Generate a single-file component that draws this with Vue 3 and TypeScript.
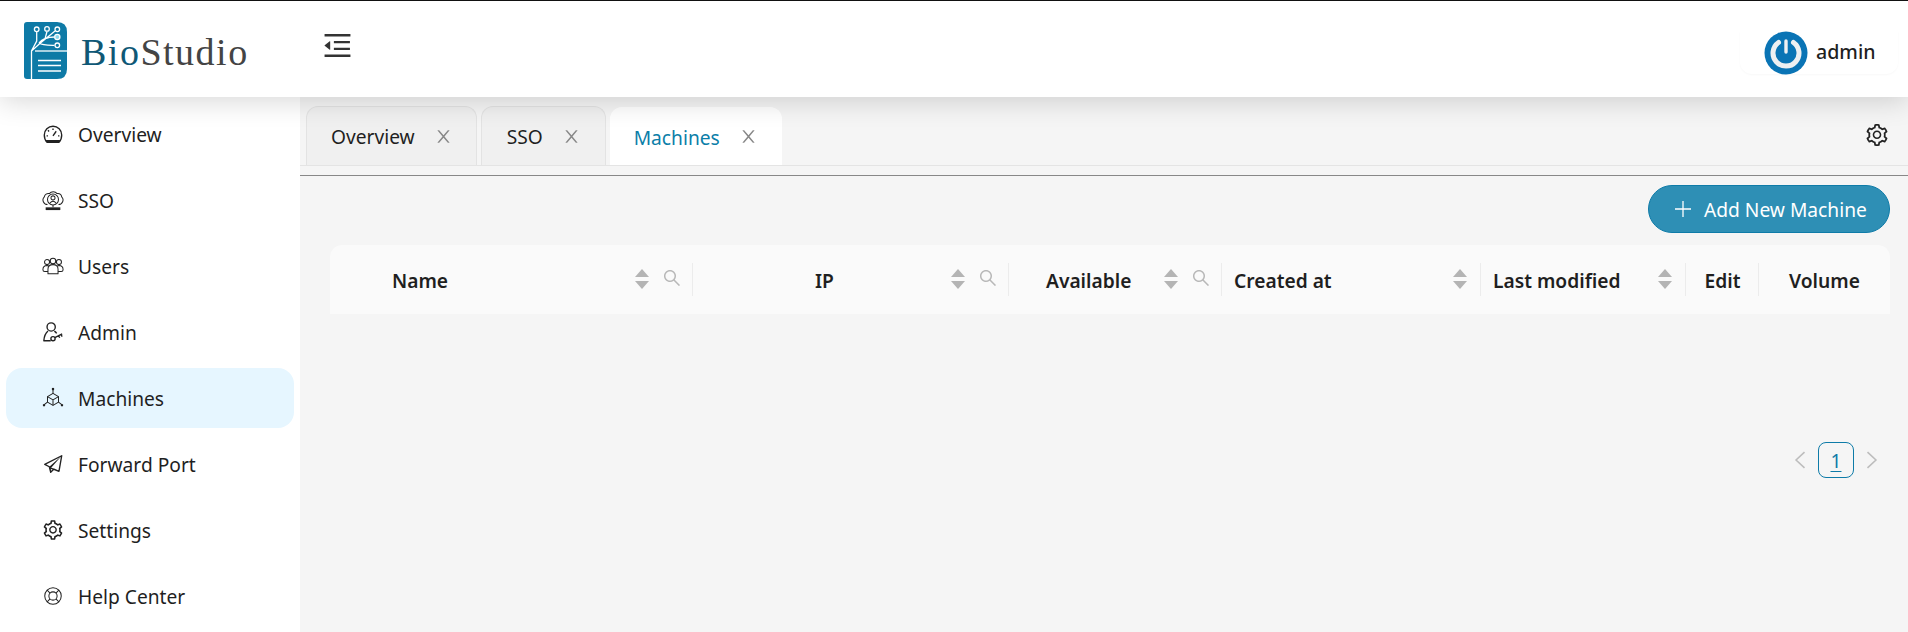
<template>
  <div class="app">
    <header class="topbar">
      <div class="brand">
        <svg class="logo" viewBox="0 0 43 57">
          <path d="M3 0H33Q43 0 43 10V47Q43 57 33 57H3Q0 57 0 54V3Q0 0 3 0Z" fill="#0e7aa6" />
          <g fill="none" stroke="#fff" stroke-width="1.3">
            <path d="M7.5 57V29L12.7 19V10M7.5 29L21 17L23 9.500M14 23L31 9M15 21Q20 15 30.500 15M15 21Q18 23.500 30.500 23.300" />
            <path d="M11 29H43" />
            <path d="M14 38.500H37M14 43.500H37M14 49H37" />
            <circle cx="12.700" cy="7.300" r="2.300" />
            <circle cx="23" cy="6.900" r="2.300" />
            <circle cx="33.300" cy="7.300" r="2.300" />
            <circle cx="33.300" cy="15" r="2.600" fill="#8fd8ee" />
            <circle cx="33.300" cy="23.300" r="2.300" />
          </g>
        </svg>
        <span class="brand-name"><span class="bio">Bio</span>Studio</span>
      </div>
      <svg class="fold" viewBox="64 64 896 896">
        <path :d="foldPath" fill="currentColor" />
      </svg>
      <div class="user">
        <svg class="avatar" viewBox="0 0 44 44">
          <circle cx="22" cy="22" r="21.500" fill="#0a74b5" />
          <path d="M14.500 11.500A13 13 0 1 0 29.500 11.500" fill="none" stroke="#eef0f2" stroke-width="5" stroke-linecap="round" />
          <path d="M22 10V21" stroke="#eef0f2" stroke-width="3.400" stroke-linecap="round" />
        </svg>
        <span class="user-name">admin</span>
      </div>
    </header>

    <div class="body">
      <aside class="sidebar">
        <a
          v-for="item in navItems"
          :key="item.label"
          class="nav-item"
          :class="{ active: item.label === 'Machines' }"
        >
          <svg class="nav-icon" :class="item.kind" :viewBox="item.box || '0 0 24 24'">
            <path v-for="d in item.paths" :key="d" :d="d" />
            <path v-for="d in item.dark" :key="d" class="dark" :d="d" />
          </svg>
          <span>{{ item.label }}</span>
        </a>
      </aside>

      <main class="main">
        <div class="tabs">
          <div
            v-for="tab in tabs"
            :key="tab"
            class="tab"
            :class="{ current: tab === 'Machines' }"
          >
            <span class="tab-label">{{ tab }}</span>
            <svg class="tab-close" viewBox="64 64 896 896">
              <path :d="closePath" fill="currentColor" />
            </svg>
          </div>
          <svg class="tabs-gear" viewBox="64 64 896 896">
            <path :d="gearPath" fill="currentColor" />
          </svg>
        </div>

        <div class="divider"></div>

        <div class="toolbar">
          <button class="add-btn">
            <svg class="plus" viewBox="0 0 16 16">
              <path d="M8 0V16M0 8H16" stroke="currentColor" stroke-width="1.3" />
            </svg>
            <span>Add New Machine</span>
          </button>
        </div>

        <div class="table-head">
          <div
            v-for="col in columns"
            :key="col.title"
            class="th"
            :class="col.cls"
            :style="{ width: col.width + 'px' }"
          >
            <span class="th-title">{{ col.title }}</span>
            <span v-if="col.sort" class="sorter">
              <i class="up"></i>
              <i class="down"></i>
            </span>
            <svg v-if="col.search" class="th-search" viewBox="64 64 896 896">
              <path :d="searchPath" fill="currentColor" />
            </svg>
          </div>
        </div>

        <div class="pager">
          <svg class="arrow" viewBox="0 0 10 16"><path d="M9 1L1.500 8L9 15" /></svg>
          <a class="page-num">1</a>
          <svg class="arrow" viewBox="0 0 10 16"><path d="M1 1L8.500 8L1 15" /></svg>
        </div>
      </main>
    </div>
  </div>
</template>

<script setup lang="ts">
interface NavItem {
  label: string
  paths: string[]
  dark?: string[]
  box?: string
  kind?: 'fill' | 'bold'
}

interface Column {
  title: string
  width: number
  cls: string
  sort?: boolean
  search?: boolean
}

const foldPath =
  'M408 442h480c4.4 0 8-3.6 8-8v-56c0-4.4-3.6-8-8-8H408c-4.4 0-8 3.6-8 8v56c0 4.4 3.6 8 8 8zm-8 204c0 4.4 3.6 8 8 8h480c4.4 0 8-3.6 8-8v-56c0-4.4-3.6-8-8-8H408c-4.4 0-8 3.6-8 8v56zm504-486H120c-4.4 0-8 3.6-8 8v56c0 4.4 3.6 8 8 8h784c4.4 0 8-3.6 8-8v-56c0-4.4-3.6-8-8-8zm0 632H120c-4.4 0-8 3.6-8 8v56c0 4.4 3.6 8 8 8h784c4.4 0 8-3.6 8-8v-56c0-4.4-3.6-8-8-8zM115.4 518.9L271.7 642c5.8 4.6 14.4.5 14.4-6.9V388.9c0-7.4-8.5-11.5-14.4-6.9L115.4 505.1a8.74 8.74 0 000 13.8z'
const closePath =
  'M563.8 512l262.5-312.9c4.4-5.2.7-13.1-6.1-13.1h-79.8c-4.7 0-9.2 2.1-12.3 5.7L511.6 449.8 295.1 191.7c-3-3.6-7.5-5.7-12.3-5.7H203c-6.8 0-10.5 7.9-6.1 13.1L459.4 512 196.9 824.9A7.95 7.95 0 00203 838h79.8c4.7 0 9.2-2.1 12.3-5.7l216.5-258.1 216.5 258.1c3 3.6 7.5 5.7 12.3 5.7h79.8c6.8 0 10.5-7.9 6.1-13.1L563.8 512z'
const searchPath =
  'M909.6 854.5L649.9 594.8C690.2 542.7 712 479 712 412c0-80.2-31.3-155.4-87.9-212.1-56.6-56.7-132-87.9-212.1-87.9s-155.5 31.3-212.1 87.9C143.2 256.5 112 331.8 112 412c0 80.1 31.3 155.5 87.9 212.1C256.5 680.8 331.8 712 412 712c67 0 130.6-21.8 182.7-62l259.7 259.6a8.2 8.2 0 0011.6 0l43.6-43.5a8.2 8.2 0 000-11.6zM570.4 570.4C528 612.7 471.8 636 412 636s-116-23.3-158.4-65.6C211.3 528 188 471.8 188 412s23.3-116.1 65.6-158.4C296 211.3 352.2 188 412 188s116.1 23.2 158.4 65.6S636 352.2 636 412s-23.3 116.1-65.6 158.4z'
const gearPath =
  'M924.8 625.7l-65.5-56c3.1-19 4.7-38.4 4.7-57.8s-1.6-38.8-4.7-57.8l65.5-56a32.03 32.03 0 009.3-35.2l-.9-2.6a443.74 443.74 0 00-79.7-137.9l-1.8-2.1a32.12 32.12 0 00-35.1-9.5l-81.3 28.9c-30-24.6-63.5-44-99.7-57.6l-15.7-85a32.05 32.05 0 00-25.8-25.7l-2.7-.5c-52.1-9.4-106.9-9.4-159 0l-2.7.5a32.05 32.05 0 00-25.8 25.7l-15.8 85.4a351.86 351.86 0 00-99 57.4l-81.9-29.1a32 32 0 00-35.1 9.5l-1.8 2.1a446.02 446.02 0 00-79.7 137.9l-.9 2.6c-4.5 12.5-.8 26.5 9.3 35.2l66.3 56.6c-3.1 18.8-4.6 38-4.6 57.1 0 19.2 1.5 38.4 4.6 57.1L99 625.5a32.03 32.03 0 00-9.3 35.2l.9 2.6c18.1 50.4 44.9 96.9 79.7 137.9l1.8 2.1a32.12 32.12 0 0035.1 9.5l81.9-29.1c29.8 24.5 63.1 43.9 99 57.4l15.8 85.4a32.05 32.05 0 0025.8 25.7l2.7.5a449.4 449.4 0 00159 0l2.7-.5a32.05 32.05 0 0025.8-25.7l15.7-85a350 350 0 0099.7-57.6l81.3 28.9a32 32 0 0035.1-9.5l1.8-2.1c34.8-41.1 61.6-87.5 79.7-137.9l.9-2.6c4.5-12.3.8-26.3-9.3-35zM788.3 465.9c2.5 15.1 3.8 30.6 3.8 46.1s-1.3 31-3.8 46.1l-6.6 40.1 74.7 63.9a370.03 370.03 0 01-42.6 73.6L721 702.8l-31.4 25.8c-23.9 19.6-50.5 35-79.3 45.8l-38.1 14.3-17.9 97a377.5 377.5 0 01-85 0l-17.9-97.2-37.8-14.5c-28.5-10.8-55-26.2-78.7-45.7l-31.4-25.9-93.4 33.2c-17-22.9-31.2-47.6-42.6-73.6l75.5-64.5-6.5-40c-2.4-14.9-3.7-30.3-3.7-45.5 0-15.3 1.2-30.6 3.7-45.5l6.5-40-75.5-64.5c11.3-26.1 25.6-50.7 42.6-73.6l93.4 33.2 31.4-25.9c23.7-19.5 50.2-34.9 78.7-45.7l37.9-14.3 17.9-97.2c28.1-3.2 56.8-3.2 85 0l17.9 97 38.1 14.3c28.7 10.8 55.4 26.2 79.3 45.8l31.4 25.8 92.8-32.9c17 22.9 31.2 47.7 42.6 73.6L781.8 426l6.5 39.9zM512 326c-97.2 0-176 78.8-176 176s78.8 176 176 176 176-78.8 176-176-78.8-176-176-176zm79.2 255.2A111.6 111.6 0 01512 614c-29.9 0-58-11.7-79.2-32.8A111.6 111.6 0 01400 502c0-29.9 11.7-58 32.8-79.2C454 401.6 482.1 390 512 390c29.9 0 58 11.6 79.2 32.8A111.6 111.6 0 01624 502c0 29.9-11.7 58-32.8 79.2z'

const navItems: NavItem[] = [
  {
    label: 'Overview',
    kind: 'bold',
    paths: [
      'M5.500 21H18.500Q21.500 18 21.500 13A9.500 9.500 0 0 0 2.500 13Q2.500 18 5.500 21Z',
      'M12 14L15.500 9',
      'M12 6V7.500M6.500 8L7.700 9.200M5 14H6.500M17.500 14H19'
    ],
    dark: ['M4 18.500H20L18.500 21H5.500Z']
  },
  {
    label: 'SSO',
    paths: [
      'M6 17A5 5 0 0 1 2.500 8.500A4.500 4.500 0 0 1 8 5A5.500 5.500 0 0 1 16.500 5A4.500 4.500 0 0 1 21.500 8.500A5 5 0 0 1 18 17',
      'M12 5.500A6 6 0 1 0 12 17.500A6 6 0 1 0 12 5.500Z',
      'M12 7.500A2.200 2.200 0 1 0 12 11.900A2.200 2.200 0 1 0 12 7.500ZM8.500 15.500Q12 11 15.500 15.500',
      'M12 17.500V20'
    ],
    dark: ['M4 20H20V23H4Z']
  },
  {
    label: 'Users',
    paths: [
      'M12 3.500A3 3 0 1 0 12 9.500A3 3 0 1 0 12 3.500ZM5.500 5A2.700 2.700 0 1 0 5.500 10.500A2.700 2.700 0 1 0 5.500 5ZM18.500 5A2.700 2.700 0 1 0 18.500 10.500A2.700 2.700 0 1 0 18.500 5Z',
      'M6.500 20.500H17.500V15.500Q17.500 10.500 12 10.500Q6.500 10.500 6.500 15.500Z',
      'M6.500 18H3Q1 18 1 16Q1 11.500 5.500 11.500L7.500 12M17.500 18H21Q23 18 23 16Q23 11.500 18.500 11.500L16.500 12'
    ]
  },
  {
    label: 'Admin',
    kind: 'bold',
    paths: [
      'M10 2A4.500 4.500 0 1 0 10 11A4.500 4.500 0 1 0 10 2Z',
      'M6.500 11Q2.500 14.500 2 21.500H9.500M13.500 11Q15 12 16 13.500',
      'M12 17A2.300 2.300 0 1 0 12 21.600A2.300 2.300 0 1 0 12 17Z',
      'M14 18.200L22 14M18 16L19.300 18.300M20.700 14.700L22 17'
    ]
  },
  {
    label: 'Machines',
    paths: [
      'M12 7L6 10.500V16.500L12 20L18 16.500V10.500Z',
      'M6 10.500L12 14L18 10.500M12 14V20',
      'M12 7V2M6 16.500L2 19.500M18 16.500L22 19.500'
    ],
    dark: ['M10.800 1H13.200V3.500H10.800Z', 'M1 18.800H3.400V21H1Z', 'M20.600 18.800H23V21H20.600Z']
  },
  {
    label: 'Forward Port',
    kind: 'bold',
    paths: ['M21.500 3L3 12.500L8 15L9.500 21L13 17.500L18.500 20ZM9.500 16.500L18.500 20'],
    dark: ['M8 15L21.500 3L9.500 16.500V21Z']
  },
  {
    label: 'Settings',
    kind: 'fill',
    box: '12 12 1000 1000',
    paths: [gearPath]
  },
  {
    label: 'Help Center',
    paths: [
      'M12 3A9 9 0 1 0 12 21A9 9 0 1 0 12 3Z',
      'M12 7.500A4.500 4.500 0 1 0 12 16.500A4.500 4.500 0 1 0 12 7.500Z',
      'M5.600 5.600L8.800 8.800M18.400 5.600L15.200 8.800M5.600 18.400L8.800 15.200M18.400 18.400L15.200 15.200'
    ]
  }
]

const tabs = ['Overview', 'SSO', 'Machines']

const columns: Column[] = [
  { title: 'Name', width: 363, cls: 'col-name', sort: true, search: true },
  { title: 'IP', width: 316, cls: 'col-ip', sort: true, search: true },
  { title: 'Available', width: 213, cls: 'col-available', sort: true, search: true },
  { title: 'Created at', width: 259, cls: 'col-created', sort: true },
  { title: 'Last modified', width: 205, cls: 'col-modified', sort: true },
  { title: 'Edit', width: 73, cls: 'col-center' },
  { title: 'Volume', width: 131, cls: 'col-center' }
]
</script>

<style>
html,
body {
  margin: 0;
  background: #f5f5f5;
}
</style>

<style scoped>
.app {
  height: 632px;
  overflow: hidden;
  display: flex;
  flex-direction: column;
  border-top: 1px solid #111;
  box-sizing: border-box;
  background: #f5f5f5;
  font-family: "Noto Sans", "Open Sans", sans-serif;
  font-size: 19.2px;
  color: #1f1f1f;
}

.topbar {
  position: relative;
  z-index: 2;
  flex: none;
  height: 96px;
  display: flex;
  align-items: flex-start;
  background: #fff;
  box-shadow: 0 4px 26px rgba(0, 0, 0, 0.16);
}

.brand {
  width: 323px;
  padding: 19px 0 0 24px;
  box-sizing: border-box;
  display: flex;
  align-items: center;
  gap: 14px;
}

.logo {
  width: 43px;
  height: 57px;
  flex: none;
}

.brand-name {
  font-family: "Liberation Serif", serif;
  font-size: 38px;
  letter-spacing: 1.5px;
  color: #444;
  line-height: 57px;
  padding-top: 4px;
}

.bio {
  color: #0f5876;
}

.fold {
  width: 29px;
  height: 29px;
  margin-top: 30px;
  color: #333;
}

.user {
  margin-left: auto;
  margin-right: 10px;
  margin-top: 30px;
  width: 158px;
  height: 43px;
  box-sizing: border-box;
  padding-left: 24px;
  display: flex;
  gap: 8px;
  border-radius: 0 0 12px 12px;
  box-shadow: 0 1px 2px rgba(0, 0, 0, 0.03);
}

.avatar {
  width: 44px;
  height: 44px;
  flex: none;
}

.user-name {
  font-size: 19.6px;
  font-weight: 500;
  line-height: 41px;
}

.body {
  flex: 1;
  display: flex;
  min-height: 0;
}

.sidebar {
  width: 300px;
  flex: none;
  box-sizing: border-box;
  padding: 7px 6px 0;
  background: #fff;
  display: flex;
  flex-direction: column;
  gap: 6px;
}

.nav-item {
  height: 60px;
  flex: none;
  display: flex;
  align-items: center;
  gap: 14px;
  padding-left: 36px;
  border-radius: 16px;
  color: #1f1f1f;
}

.nav-item.active {
  background: #e6f6ff;
}

.nav-icon {
  width: 22px;
  height: 22px;
  flex: none;
  fill: none;
  stroke: #222;
  stroke-width: 1.1;
  stroke-linejoin: round;
}

.nav-icon .dark {
  fill: #222;
  stroke: none;
}

.nav-icon.bold {
  stroke-width: 1.5;
}

.nav-icon.fill {
  fill: #222;
  stroke: none;
}

.main {
  flex: 1;
  min-width: 0;
}

.tabs {
  height: 60px;
  margin-top: 8px;
  padding-left: 6px;
  display: flex;
  align-items: flex-end;
  gap: 4px;
  border-bottom: 1px solid #e4e4e4;
}

.tab {
  height: 59px;
  min-width: 125px;
  box-sizing: border-box;
  padding: 0 24px;
  display: flex;
  align-items: center;
  justify-content: center;
  gap: 20px;
  background: #f0f0f0;
  border: 1px solid #e3e3e3;
  border-bottom: none;
  border-radius: 12px 12px 0 0;
}

.tab-label {
  padding-top: 1px;
}

.tab.current {
  height: 58px;
  background: #fff;
  border-color: #fff;
  color: #0b7ea8;
  padding: 0 24px 0 23px;
}

.tab-close {
  width: 17px;
  height: 17px;
  color: #888;
}

.tabs-gear {
  width: 22px;
  height: 22px;
  margin-left: auto;
  margin-right: 20px;
  align-self: center;
  color: #222;
}

.divider {
  height: 1px;
  margin-top: 9px;
  background: #888;
}

.toolbar {
  display: flex;
  justify-content: flex-end;
  padding: 9px 18px 0 0;
}

.add-btn {
  width: 242px;
  height: 48px;
  padding: 0 0 0 26px;
  display: flex;
  align-items: center;
  gap: 13px;
  background: #2e8fb5;
  border: 1px solid #0e7ba8;
  border-radius: 24px;
  box-sizing: border-box;
  color: #fff;
  font: inherit;
}

.plus {
  width: 16px;
  height: 16px;
}

.table-head {
  display: flex;
  height: 69px;
  margin: 12px 18px 0 30px;
  background: #fafafa;
  border-radius: 12px 12px 0 0;
  font-weight: 600;
}

.th {
  position: relative;
  box-sizing: border-box;
  display: flex;
  align-items: center;
  padding-right: 12px;
  color: #1f1f1f;
}

.th:not(:last-child)::after {
  content: "";
  position: absolute;
  right: 0;
  top: 18px;
  bottom: 18px;
  width: 1px;
  background: #ececec;
}

.th-title {
  flex: 1;
  padding-top: 2px;
}

.col-name {
  padding-left: 62px;
}

.col-ip {
  padding-left: 122px;
}

.col-available {
  padding-left: 37px;
}

.col-created,
.col-modified {
  padding-left: 12px;
  padding-right: 14px;
}

.col-center {
  padding: 0;
  text-align: center;
}

.sorter {
  width: 14px;
  display: flex;
  flex-direction: column;
  gap: 4px;
  margin-top: -2px;
}

.sorter i {
  width: 0;
  height: 0;
  border-left: 7px solid transparent;
  border-right: 7px solid transparent;
}

.up {
  border-bottom: 8px solid #b4b4b4;
}

.down {
  border-top: 8px solid #b4b4b4;
}

.th-search {
  width: 18px;
  height: 18px;
  margin: -3px 0 0 14px;
  color: #b8b8b8;
}

.pager {
  display: flex;
  justify-content: flex-end;
  align-items: center;
  gap: 12px;
  margin: 128px 30px 0 0;
}

.arrow {
  width: 12px;
  height: 18px;
  fill: none;
  stroke: #bdbdbd;
  stroke-width: 1.4;
}

.page-num {
  width: 36px;
  height: 36px;
  box-sizing: border-box;
  display: flex;
  align-items: center;
  justify-content: center;
  border: 1px solid #0e7ba8;
  border-radius: 8px;
  color: #0e7ba8;
  text-decoration: underline;
  text-underline-offset: 3px;
}
</style>
